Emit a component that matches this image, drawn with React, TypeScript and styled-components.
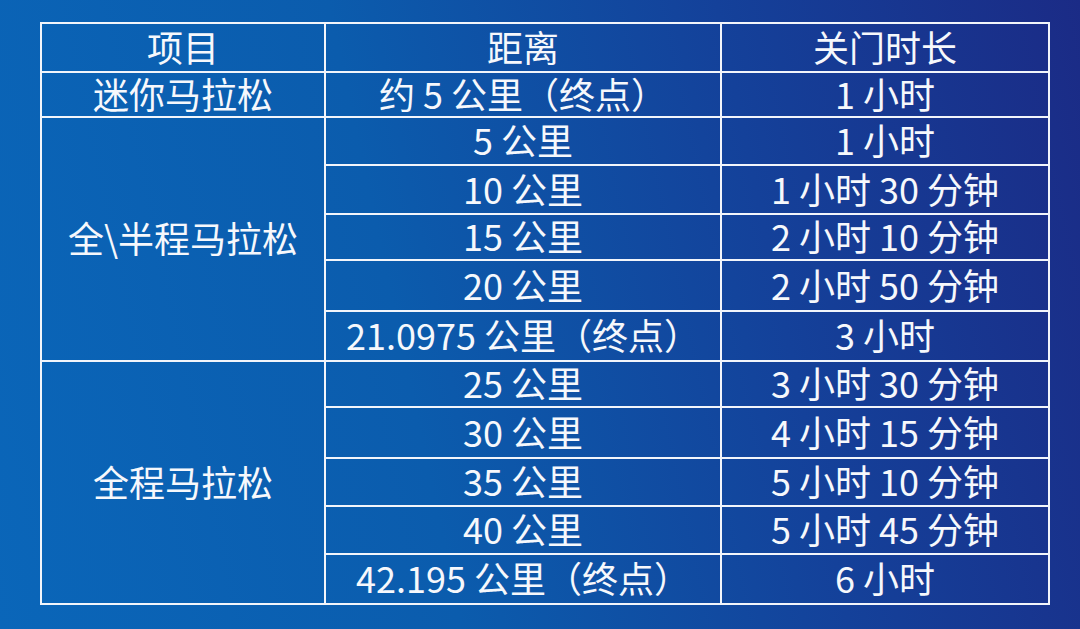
import React from "react";
import styled, { createGlobalStyle } from "styled-components";

const Global = createGlobalStyle`
  html, body { margin: 0; padding: 0; }
  body { width: 1080px; height: 629px; overflow: hidden; }
  #root { width: 1080px; height: 629px; }
`;

const Page = styled.div`
  width: 1080px;
  height: 629px;
  box-sizing: border-box;
  padding: 22px 0 0 40px;
  background: linear-gradient(78deg, #0a66b9 0%, #0b5cad 38%, #14419a 70%, #1b2b86 100%);
  font-family: "Noto Sans CJK SC", "Noto Sans", sans-serif;
  color: #f6f8fc;
`;

const Table = styled.table`
  border-collapse: collapse;
  table-layout: fixed;
  width: 1008px;
  border: 2px solid #f2f5fb;
`;

const Row = styled.tr<{ $h: number }>`
  height: ${(p) => p.$h}px;
`;

const Cell = styled.td`
  border: 2px solid #f2f5fb;
  padding: 0 0 4px;
  text-align: center;
  vertical-align: middle;
  font-size: 36px;
  line-height: 1;
  font-weight: 400;
  white-space: nowrap;
  box-sizing: border-box;
`;

type R = { name?: string; span?: number; dist: string; time: string; h: number };

const rows: R[] = [
  { name: "迷你马拉松", span: 1, dist: "约 5 公里（终点）", time: "1 小时", h: 45 },
  { name: "全\\半程马拉松", span: 5, dist: "5 公里", time: "1 小时", h: 48 },
  { dist: "10 公里", time: "1 小时 30 分钟", h: 49 },
  { dist: "15 公里", time: "2 小时 10 分钟", h: 46 },
  { dist: "20 公里", time: "2 小时 50 分钟", h: 51 },
  { dist: "21.0975 公里（终点）", time: "3 小时", h: 50 },
  { name: "全程马拉松", span: 6, dist: "25 公里", time: "3 小时 30 分钟", h: 46 },
  { dist: "30 公里", time: "4 小时 15 分钟", h: 51 },
  { dist: "35 公里", time: "5 小时 10 分钟", h: 48 },
  { dist: "40 公里", time: "5 小时 45 分钟", h: 48 },
  { dist: "42.195 公里（终点）", time: "6 小时", h: 50 },
];

export default function App() {
  return (
    <>
      <Global />
      <Page>
        <Table>
          <colgroup>
            <col style={{ width: 284 }} />
            <col style={{ width: 396 }} />
            <col style={{ width: 328 }} />
          </colgroup>
          <tbody>
            <Row $h={49}>
              <Cell>项目</Cell>
              <Cell>距离</Cell>
              <Cell>关门时长</Cell>
            </Row>
            {rows.map((r, i) => (
              <Row key={i} $h={r.h}>
                {r.name !== undefined && <Cell rowSpan={r.span}>{r.name}</Cell>}
                <Cell>{r.dist}</Cell>
                <Cell>{r.time}</Cell>
              </Row>
            ))}
          </tbody>
        </Table>
      </Page>
    </>
  );
}
